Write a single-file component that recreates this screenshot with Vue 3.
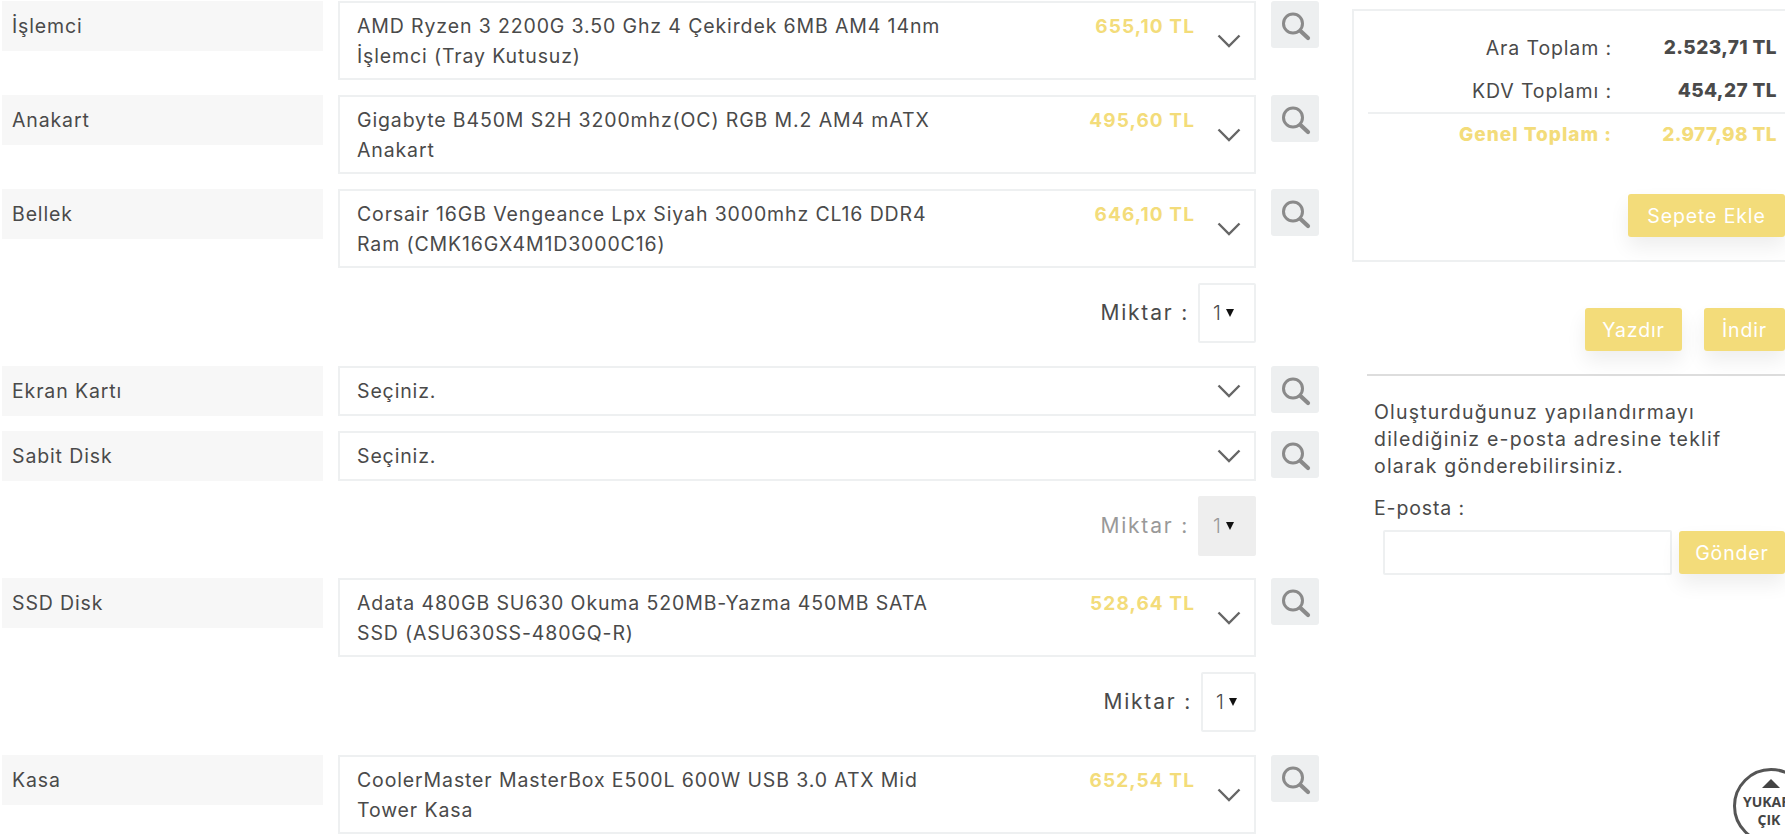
<script setup>
// Parts of the configuration, in page order
const rows = [
  { type: 'part', label: 'İşlemci', name: 'AMD Ryzen 3 2200G 3.50 Ghz 4 Çekirdek 6MB AM4 14nm İşlemci (Tray Kutusuz)', price: '655,10 TL' },
  { type: 'part', label: 'Anakart', name: 'Gigabyte B450M S2H 3200mhz(OC) RGB M.2 AM4 mATX Anakart', price: '495,60 TL' },
  { type: 'part', label: 'Bellek', name: 'Corsair 16GB Vengeance Lpx Siyah 3000mhz CL16 DDR4 Ram (CMK16GX4M1D3000C16)', price: '646,10 TL' },
  { type: 'qty', size: 'wide' },
  { type: 'part', label: 'Ekran Kartı', name: 'Seçiniz.', empty: true },
  { type: 'part', label: 'Sabit Disk', name: 'Seçiniz.', empty: true },
  { type: 'qty', size: 'wide', disabled: true },
  { type: 'part', label: 'SSD Disk', name: 'Adata 480GB SU630 Okuma 520MB-Yazma 450MB SATA SSD (ASU630SS-480GQ-R)', price: '528,64 TL' },
  { type: 'qty', size: 'narrow' },
  { type: 'part', label: 'Kasa', name: 'CoolerMaster MasterBox E500L 600W USB 3.0 ATX Mid Tower Kasa', price: '652,54 TL' }
];
</script>

<template>
  <div class="page">
    <div class="parts">
      <template v-for="(row, i) in rows" :key="i">
        <div v-if="row.type === 'part'" class="part-row" :class="{ short: row.empty }">
          <div class="part-label">{{ row.label }}</div>
          <div class="part-select">
            <div class="part-name">{{ row.name }}</div>
            <div v-if="row.price" class="part-price">{{ row.price }}</div>
            <svg class="chevron" width="24" height="14" viewBox="0 0 24 14">
              <path d="M1.5 1.5 L12 12 L22.5 1.5" fill="none" stroke="#666" stroke-width="2.4" />
            </svg>
          </div>
          <div class="search-btn">
            <svg width="48" height="47" viewBox="0 0 48 47">
              <circle cx="22" cy="22.5" r="9.5" fill="none" stroke="#8a8a8a" stroke-width="3" />
              <path d="M29.5 30 L37 37" fill="none" stroke="#8a8a8a" stroke-width="4.2" stroke-linecap="round" />
            </svg>
          </div>
        </div>
        <div v-else class="qty-row" :class="{ disabled: row.disabled }">
          <span class="qty-label">Miktar :</span>
          <div class="qty-box" :class="row.size">
            <span class="qty-value">1</span>
            <span class="qty-arrow"></span>
          </div>
        </div>
      </template>
    </div>

    <div class="side">
      <div class="summary">
        <div class="sum-row">
          <span class="sum-label">Ara Toplam :</span>
          <span class="sum-value">2.523,71 TL</span>
        </div>
        <div class="sum-row">
          <span class="sum-label">KDV Toplamı :</span>
          <span class="sum-value">454,27 TL</span>
        </div>
        <div class="sum-row total">
          <span class="sum-label">Genel Toplam :</span>
          <span class="sum-value">2.977,98 TL</span>
        </div>
        <div class="cart-line">
          <button class="btn cart-btn">Sepete Ekle</button>
        </div>
      </div>

      <div class="actions">
        <button class="btn print-btn">Yazdır</button>
        <button class="btn save-btn">İndir</button>
      </div>

      <div class="mail">
        <p class="mail-text">Oluşturduğunuz yapılandırmayı<br />dilediğiniz e-posta adresine teklif<br />olarak gönderebilirsiniz.</p>
        <div class="mail-label">E-posta :</div>
        <div class="mail-form">
          <input class="mail-input" type="text" />
          <button class="btn send-btn">Gönder</button>
        </div>
      </div>
    </div>

    <div class="to-top">
      <span class="to-top-arrow"></span>
      <span class="to-top-text">YUKARI<br />ÇIK</span>
    </div>
  </div>
</template>

<style>
html, body {
  margin: 0;
  overflow: hidden;
}
</style>

<style scoped>
.page {
  position: relative;
  display: flex;
  width: 1785px;
  height: 834px;
  overflow: hidden;
  background: #fff;
  color: #4a4a4a;
  font-family: Inter, "Liberation Sans", sans-serif;
  font-size: 19.5px;
  letter-spacing: 0.87px;
}

.parts {
  flex: none;
  width: 1317px;
  margin-left: 2px;
  padding-top: 1px;
}

.part-row {
  display: flex;
  align-items: flex-start;
  margin-bottom: 15px;
}

.part-label {
  flex: none;
  width: 311px;
  height: 50px;
  padding-left: 10px;
  background: #f7f7f7;
  line-height: 50px;
}

.part-select {
  flex: none;
  box-sizing: border-box;
  display: flex;
  align-items: flex-start;
  width: 918px;
  height: 79px;
  margin-left: 15px;
  padding: 8px 13px 0 17px;
  border: 2px solid #eef0f1;
}

.short .part-select {
  height: 50px;
}

.part-name {
  width: 592px;
  line-height: 30px;
}

.part-price {
  margin-top: 3px;
  margin-left: auto;
  margin-right: 22px;
  font-size: 19px;
  font-weight: 700;
  letter-spacing: 1.1px;
  line-height: 26px;
  color: #f3dc7a;
}

.chevron {
  flex: none;
  margin-top: 23px;
  margin-left: auto;
}

.part-price + .chevron {
  margin-left: 0;
}

.short .chevron {
  margin-top: 8px;
}

.search-btn {
  flex: none;
  width: 48px;
  height: 47px;
  margin-left: 15px;
  border-radius: 3px;
  background: #edeff0;
}

.qty-row {
  display: flex;
  align-items: center;
  justify-content: flex-end;
  width: 1254px;
  height: 60px;
  margin-bottom: 23px;
}

.qty-row.disabled {
  margin-bottom: 22px;
}

.qty-label {
  padding-bottom: 2px;
  font-size: 21px;
  letter-spacing: 1.8px;
}

.qty-box {
  box-sizing: border-box;
  display: flex;
  align-items: center;
  height: 60px;
  margin-left: 9px;
  padding-left: 13px;
  border: 2px solid #eef0f1;
  border-radius: 2px;
  font-size: 20px;
  letter-spacing: 0;
}

.qty-box.wide {
  width: 58px;
}

.qty-box.narrow {
  width: 55px;
}

.qty-value {
  font-weight: 300;
}

.qty-arrow {
  width: 0;
  height: 0;
  margin-left: 5px;
  border-left: 4.5px solid transparent;
  border-right: 4.5px solid transparent;
  border-top: 8px solid #111;
}

.disabled .qty-label {
  color: #999;
}

.disabled .qty-box {
  border-color: #eee;
  background: #eee;
  color: #999;
}

.side {
  flex: none;
  width: 433px;
  margin-left: 33px;
}

.summary {
  box-sizing: border-box;
  width: 448px;
  height: 253px;
  margin-top: 9px;
  padding: 15px 13px 0 14px;
  border: 2px solid #eef0f1;
}

.sum-row {
  display: flex;
  height: 43px;
  align-items: center;
}

.sum-label {
  width: 244px;
  text-align: right;
}

.sum-value {
  width: 165px;
  font-size: 19px;
  font-weight: 800;
  letter-spacing: 0.4px;
  text-align: right;
}

.total {
  height: 41px;
  padding-bottom: 3px;
  border-top: 2px solid #eef0f1;
  color: #f3dc7a;
}

.total .sum-label {
  font-weight: 800;
  font-size: 19px;
  letter-spacing: 1px;
}

.cart-line {
  display: flex;
  justify-content: flex-end;
  margin-top: 36px;
}

.btn {
  box-sizing: border-box;
  height: 43px;
  padding: 0;
  border: none;
  border-radius: 3px;
  background: #f3dc7a;
  box-shadow: 0 10px 20px rgba(0, 0, 0, 0.07);
  color: #fff;
  font-family: inherit;
  font-size: 19.5px;
  letter-spacing: 0.87px;
}

.cart-btn {
  width: 157px;
}

.actions {
  display: flex;
  justify-content: flex-end;
  gap: 22px;
  margin-top: 46px;
}

.print-btn {
  width: 97px;
}

.save-btn {
  width: 81px;
}

.mail {
  margin-top: 23px;
  margin-left: 15px;
  border-top: 2px solid #ddd;
  padding: 23px 0 0 7px;
}

.mail-text {
  margin: 0;
  line-height: 27px;
  letter-spacing: 1.2px;
}

.mail-label {
  margin-top: 15px;
  line-height: 27px;
}

.mail-form {
  display: flex;
  gap: 7px;
  margin-top: 8px;
  margin-left: 9px;
}

.mail-input {
  box-sizing: border-box;
  width: 289px;
  height: 45px;
  border: 2px solid #eef0f1;
  border-radius: 2px;
  background: #fff;
}

.send-btn {
  width: 106px;
  margin-top: 1px;
}

.to-top {
  position: absolute;
  left: 1733px;
  top: 768px;
  box-sizing: border-box;
  display: flex;
  flex-direction: column;
  align-items: center;
  width: 76px;
  height: 76px;
  padding-top: 8px;
  border: 3px solid #555;
  border-radius: 50%;
  background: #fff;
}

.to-top-arrow {
  width: 0;
  height: 0;
  border-left: 9px solid transparent;
  border-right: 9px solid transparent;
  border-bottom: 9px solid #444;
}

.to-top-text {
  margin-top: 5px;
  margin-right: 4px;
  font-family: "Open Sans", sans-serif;
  font-size: 14px;
  font-weight: 700;
  letter-spacing: 0;
  line-height: 18px;
  text-align: center;
  color: #444;
}
</style>
